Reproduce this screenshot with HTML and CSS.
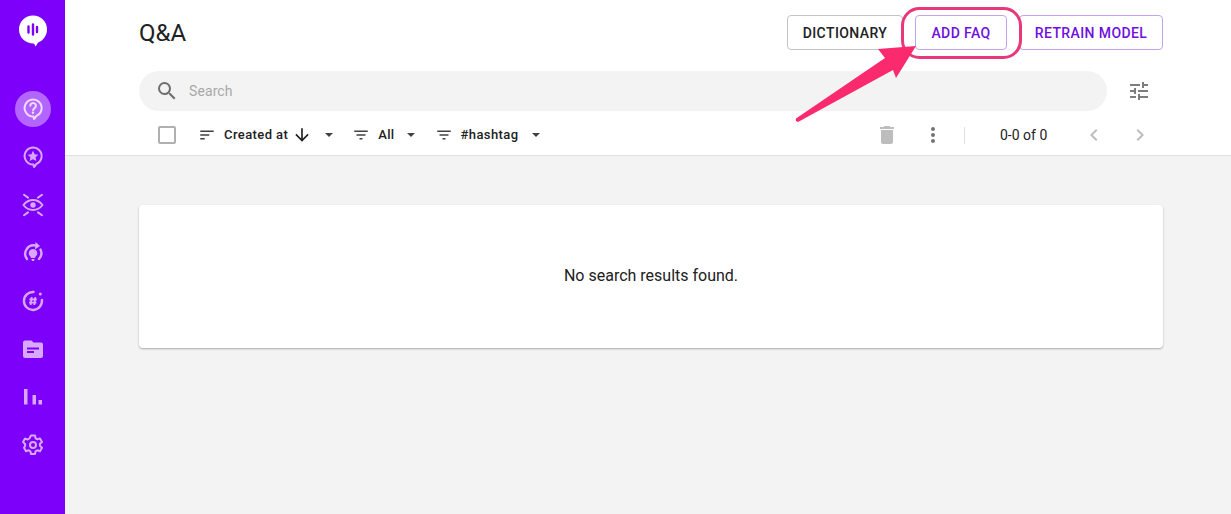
FILE: index.html
```html
<!DOCTYPE html>
<html lang="en">
<head>
<meta charset="utf-8">
<title>Q&amp;A</title>
<link rel="stylesheet" href="styles.css">
</head>
<body>
<div class="app">
  <nav class="rail">
    <div class="logo">
      <svg viewBox="0 0 30 32" width="30" height="32"><path class="logo-bubble" d="M15 0.5a14 14 0 0 1 14 14c0 6-3.600 10.600-8 12.600-1.300.7-2.200 2.300-3.200 4.400-1-1.500-1.600-2.900-2.300-3.100C8 28.400 1 23 1 14.500a14 14 0 0 1 14-14z"/><path class="logo-bars" d="M10.500 11.500v6M15 9.500v10M19 12v5"/></svg>
    </div>
    <div class="rail-items">
      <div class="rail-item active">
        <svg viewBox="0 0 24 24" width="24" height="24"><path class="ln" d="M15.300 18.900A8.500 8.500 0 1 0 12.500 19.500L13 22C14 21 15 20 15.300 18.900Z"/><path class="ln" d="M9.300 8.800a2.800 2.800 0 1 1 4.300 2.300c-1 .7-1.500 1.200-1.500 2.200"/><circle class="fl" cx="12" cy="15.800" r="1.200"/></svg>
      </div>
      <div class="rail-item">
        <svg viewBox="0 0 24 24" width="24" height="24"><path class="ln" d="M15.300 18.900A8.500 8.500 0 1 0 12.500 19.500L13 22C14 21 15 20 15.300 18.900Z"/><path class="fl" d="M12 5.800l1.600 3.400 3.700.5-2.700 2.600.7 3.700-3.300-1.800-3.300 1.800.7-3.700-2.700-2.600 3.700-.5z"/></svg>
      </div>
      <div class="rail-item">
        <svg viewBox="0 0 24 24" width="24" height="24"><path class="ln" d="M2.500 12c2.500-3.300 5.700-5 9.500-5s7 1.700 9.500 5c-2.500 3.300-5.700 5-9.500 5s-7-1.700-9.500-5z"/><circle class="fl" cx="12" cy="12" r="2.700"/><path class="ln" d="M3 1.800l4 2.800M21 1.800l-4 2.800M3 22.200l4-2.800M21 22.200l-4-2.800"/></svg>
      </div>
      <div class="rail-item">
        <svg viewBox="0 0 24 24" width="24" height="24"><path class="ln wide" d="M6 18A8.500 8.500 0 0 1 14.500 4.500M19.500 8.500A8.500 8.500 0 0 1 18 18"/><path class="fl" d="M14.500 1l4.500 4-5 3.500z"/><path class="fl" d="M12 8a4.200 4.200 0 0 1 2.600 7.500l-.6 1.500h-4l-.6-1.500A4.200 4.200 0 0 1 12 8zM10.300 18h3.400l-.7 2h-2z"/></svg>
      </div>
      <div class="rail-item">
        <svg viewBox="0 0 24 24" width="24" height="24"><path class="ln wide" d="M20.900 11a9 9 0 1 1-8.400-8"/><circle class="fl" cx="19.300" cy="5" r="1.500"/><path class="ln thin" d="M10.700 8l-1 8M14.300 8l-1 8M8.400 10.500h7.400M8 13.700h7.400"/></svg>
      </div>
      <div class="rail-item">
        <svg viewBox="0 0 24 24" width="24" height="24"><path class="fl" d="M4 3.500h6.500l2 2H20a2 2 0 0 1 2 2V19a2 2 0 0 1-2 2H4a2 2 0 0 1-2-2V5.500a2 2 0 0 1 2-2z"/><path class="cut" d="M6 11.500h12M6 15h7"/></svg>
      </div>
      <div class="rail-item">
        <svg viewBox="0 0 24 24" width="24" height="24"><path class="fl" d="M3 4h3.500v15.500H3zM11.500 10H15v9.500h-3.500zM17.500 15H21v4.500h-3.500z"/></svg>
      </div>
      <div class="rail-item">
        <svg viewBox="0 0 24 24" width="24" height="24"><path class="ln" d="M10 2.500h4l.6 2.800 1.700 1 2.700-.9 2 3.500-2.100 1.900v2l2.100 1.900-2 3.500-2.700-.9-1.700 1-.6 2.800h-4l-.6-2.800-1.700-1-2.700.9-2-3.500L4.100 13v-2L2 9.100l2-3.500 2.700.9 1.700-1z"/><circle class="ln" cx="12" cy="12" r="3"/></svg>
      </div>
    </div>
  </nav>

  <main class="content">
    <header class="head">
      <div class="title-row">
        <h1 class="title">Q&amp;A</h1>
        <div class="actions">
          <button class="btn dark">DICTIONARY</button>
          <button class="btn primary add">ADD FAQ</button>
          <button class="btn primary retrain">RETRAIN MODEL</button>
        </div>
      </div>
      <div class="search-row">
        <div class="search">
          <svg class="search-icon" viewBox="0 0 24 24" width="24" height="24"><path d="M15.500 14h-.79l-.28-.27A6.470 6.470 0 0 0 16 9.500 6.500 6.500 0 1 0 9.500 16c1.610 0 3.090-.59 4.230-1.570l.27.28v.79l5 4.990L20.490 19l-4.990-5zm-6 0C7.010 14 5 11.990 5 9.500S7.010 5 9.500 5 14 7.010 14 9.500 11.990 14 9.500 14z"/></svg>
          <span class="placeholder">Search</span>
        </div>
        <svg class="tune" viewBox="0 0 24 24" width="24" height="24"><path d="M3 17v2h6v-2H3zM3 5v2h10V5H3zm10 16v-2h8v-2h-8v-2h-2v6h2zM7 9v2H3v2h4v2h2V9H7zm14 4v-2H11v2h10zm-6-4h2V7h4V5h-4V3h-2v6z"/></svg>
      </div>
      <div class="toolbar">
        <span class="checkbox"></span>
        <div class="filter sort">
          <svg class="f-icon" viewBox="0 0 24 24" width="18" height="18"><path d="M3 18h6v-2H3v2zM3 6v2h18V6H3zm0 7h12v-2H3v2z"/></svg>
          <span class="f-label">Created at</span>
          <svg class="arrow" viewBox="0 0 24 24" width="20" height="20"><path d="M20 12l-1.410-1.410L13 16.170V4h-2v12.170l-5.580-5.590L4 12l8 8 8-8z"/></svg>
          <span class="caret"></span>
        </div>
        <div class="filter all">
          <svg class="f-icon" viewBox="0 0 24 24" width="18" height="18"><path d="M10 18h4v-2h-4v2zM3 6v2h18V6H3zm3 7h12v-2H6v2z"/></svg>
          <span class="f-label">All</span>
          <span class="caret"></span>
        </div>
        <div class="filter tag">
          <svg class="f-icon" viewBox="0 0 24 24" width="18" height="18"><path d="M10 18h4v-2h-4v2zM3 6v2h18V6H3zm3 7h12v-2H6v2z"/></svg>
          <span class="f-label">#hashtag</span>
          <span class="caret"></span>
        </div>
        <div class="tools">
          <svg class="trash" viewBox="0 0 24 24" width="24" height="24"><path d="M6 19c0 1.100.9 2 2 2h8c1.100 0 2-.9 2-2V7H6v12zM19 4h-3.500l-1-1h-5l-1 1H5v2h14V4z"/></svg>
          <svg class="more" viewBox="0 0 24 24" width="24" height="24"><path d="M12 8c1.100 0 2-.9 2-2s-.9-2-2-2-2 .9-2 2 .9 2 2 2zm0 2c-1.100 0-2 .9-2 2s.9 2 2 2 2-.9 2-2-.9-2-2-2zm0 6c-1.100 0-2 .9-2 2s.9 2 2 2 2-.9 2-2-.9-2-2-2z"/></svg>
          <span class="divider"></span>
          <span class="count">0-0 of 0</span>
          <svg class="pager" viewBox="0 0 24 24" width="24" height="24"><path d="M15.410 7.410L14 6l-6 6 6 6 1.410-1.410L10.830 12z"/></svg>
          <svg class="pager" viewBox="0 0 24 24" width="24" height="24"><path d="M10 6L8.590 7.410 13.170 12l-4.580 4.590L10 18l6-6z"/></svg>
        </div>
      </div>
    </header>
    <section class="body">
      <div class="card"><span class="empty">No search results found.</span></div>
    </section>
  </main>
</div>

<svg class="annotation" viewBox="0 0 1231 514" width="1231" height="514">
  <rect class="ring" x="902.500" y="8.500" width="118" height="49" rx="17"/>
  <path class="pointer" d="M916 46L878 49L885 58L796 118.500Q795 121 798 122L893 70L896 78Z"/>
</svg>
</body>
</html>
```
FILE: styles.css
```css
* { box-sizing: border-box; }
html, body { margin: 0; height: 100%; }
body {
  font-family: Roboto, "Liberation Sans", sans-serif;
  color: #212121;
  background: #f3f3f3;
  overflow: hidden;
}
.app { display: flex; height: 514px; position: relative; }

.rail {
  width: 65px;
  flex: none;
  background: #7d00fa;
  display: flex;
  flex-direction: column;
  align-items: center;
  padding-top: 15px;
}
.logo { height: 32px; width: 30px; margin-bottom: 44px; }
.logo svg { display: block; }
.logo-bubble { fill: #fff; }
.logo-bars { fill: none; stroke: #7d00fa; stroke-width: 2.400; stroke-linecap: round; }
.rail-items { display: flex; flex-direction: column; gap: 12px; }
.rail-item {
  width: 36px;
  height: 36px;
  border-radius: 50%;
  display: flex;
  align-items: center;
  justify-content: center;
}
.rail-item.active { background: #b366ff; }
.rail-item svg { display: block; }
.ln { fill: none; stroke: #d8a8ff; stroke-width: 2; stroke-linecap: round; stroke-linejoin: round; }
.ln.thin { stroke-width: 1.800; stroke-linecap: butt; }
.ln.wide { stroke-width: 2.400; }
.fl { fill: #d8a8ff; }
.cut { fill: none; stroke: #7d00fa; stroke-width: 2; }
.rail-item.active .ln { stroke: #f0dcff; }
.rail-item.active .fl { fill: #f0dcff; }

.content { flex: 1; min-width: 0; display: flex; flex-direction: column; }
.head {
  background: #fff;
  border-bottom: 1px solid #e0e0e0;
  height: 156px;
  padding: 15px 68px 0 74px;
}
.title-row { display: flex; align-items: center; justify-content: space-between; height: 35px; }
.title { margin: 0; font-size: 24px; font-weight: 400; color: #212121; }
.actions { display: flex; gap: 12px; }
.btn {
  height: 35px;
  padding: 0;
  background: #fff;
  border-radius: 4px;
  font-family: inherit;
  font-size: 14px;
  font-weight: 500;
  letter-spacing: 0.4px;
  border: 1px solid #c4c4c4;
}
.btn.dark { width: 116px; color: #212121; }
.btn.primary { color: #6f0fe0; border-color: #c5a3e8; }
.btn.add { width: 92px; }
.btn.retrain { width: 144px; }

.search-row { display: flex; align-items: center; margin-top: 21px; gap: 20px; }
.search {
  flex: 1;
  height: 40px;
  background: #f3f3f3;
  border-radius: 20px;
  display: flex;
  align-items: center;
  padding-left: 16px;
  gap: 10px;
}
.search-icon { fill: #6e6e6e; flex: none; }
.placeholder { font-size: 14px; color: #a8a8a8; letter-spacing: 0.1px; }
.tune { fill: #7d7d7d; flex: none; margin-right: 12px; }

.toolbar { display: flex; align-items: center; height: 40px; margin-top: 4px; padding-left: 19px; }
.checkbox {
  width: 18px;
  height: 18px;
  border: 2px solid #b0b0b0;
  border-radius: 2px;
  flex: none;
  margin-right: 22px;
}
.filter { display: flex; align-items: center; font-size: 13px; font-weight: 500; letter-spacing: 0.4px; color: #212121; }
.f-icon { fill: #424242; flex: none; margin-right: 8px; }
.f-label { padding-bottom: 2px; }
.arrow { fill: #212121; margin-left: 4px; }
.caret {
  width: 0;
  height: 0;
  border-left: 4px solid transparent;
  border-right: 4px solid transparent;
  border-top: 4px solid #424242;
}
.filter.sort { margin-right: 19px; }
.filter.sort .caret { margin-left: 13px; }
.filter.all { margin-right: 20px; }
.filter.all .caret { margin-left: 12px; }
.filter.tag .caret { margin-left: 14px; }
.tools { margin-left: auto; display: flex; align-items: center; }
.trash { fill: #bdbdbd; margin-right: 22px; }
.more { fill: #757575; margin-right: 19px; }
.divider { width: 1px; height: 17px; background: #e0e0e0; margin-right: 35px; }
.count { font-size: 14px; color: #212121; width: 49px; white-space: nowrap; margin-right: 33px; }
.pager { fill: #bdbdbd; margin-right: 22px; }
.pager:last-child { margin-right: 11px; }

.body { flex: 1; padding: 49px 68px 0 74px; background: #f3f3f3; }
.card {
  height: 143px;
  background: #fff;
  border-radius: 4px;
  box-shadow: 0 1px 2px rgba(0,0,0,.3);
  display: flex;
  align-items: center;
  justify-content: center;
  font-size: 16px;
  color: #212121;
}
.empty { padding-bottom: 2px; }

.annotation { position: absolute; left: 0; top: 0; pointer-events: none; }
.ring { fill: none; stroke: #e8387a; stroke-width: 3; }
.pointer { fill: #fb2a6f; }
```
